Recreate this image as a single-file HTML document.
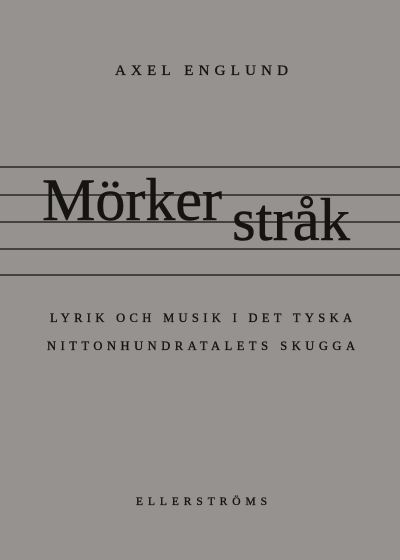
<!DOCTYPE html>
<html><head><meta charset="utf-8"><style>
html,body{margin:0;padding:0;background:#959290;}
svg{display:block}
</style></head><body>
<svg width="400" height="560" viewBox="0 0 400 560" xmlns="http://www.w3.org/2000/svg">
<rect width="400" height="560" fill="#959290"/>
<g stroke="#2a2827" stroke-width="1.6">
<line x1="0" y1="167" x2="400" y2="167"/>
<line x1="0" y1="195" x2="400" y2="195"/>
<line x1="0" y1="222" x2="400" y2="222"/>
<line x1="0" y1="249" x2="400" y2="249"/>
<line x1="0" y1="275" x2="400" y2="275"/>
</g>
<g font-family="Liberation Serif, serif" fill="#151413" stroke="#151413">
<text x="115" y="75" font-size="15" stroke-width="0.35" textLength="173" lengthAdjust="spacing">AXEL ENGLUND</text>
<text x="42" y="220" font-size="60" stroke-width="0.5" textLength="180" lengthAdjust="spacingAndGlyphs">Mörker</text>
<text x="232" y="240" font-size="60" stroke-width="0.5" textLength="118" lengthAdjust="spacingAndGlyphs">stråk</text>
<text x="50" y="322" font-size="12.5" stroke-width="0.35" textLength="302" lengthAdjust="spacing">LYRIK OCH MUSIK I DET TYSKA</text>
<text x="47" y="350" font-size="12.5" stroke-width="0.35" textLength="308" lengthAdjust="spacing">NITTONHUNDRATALETS SKUGGA</text>
<text x="136" y="505" font-size="11.5" stroke-width="0.35" textLength="131" lengthAdjust="spacing">ELLERSTRÖMS</text>
</g>
</svg>
</body></html>
